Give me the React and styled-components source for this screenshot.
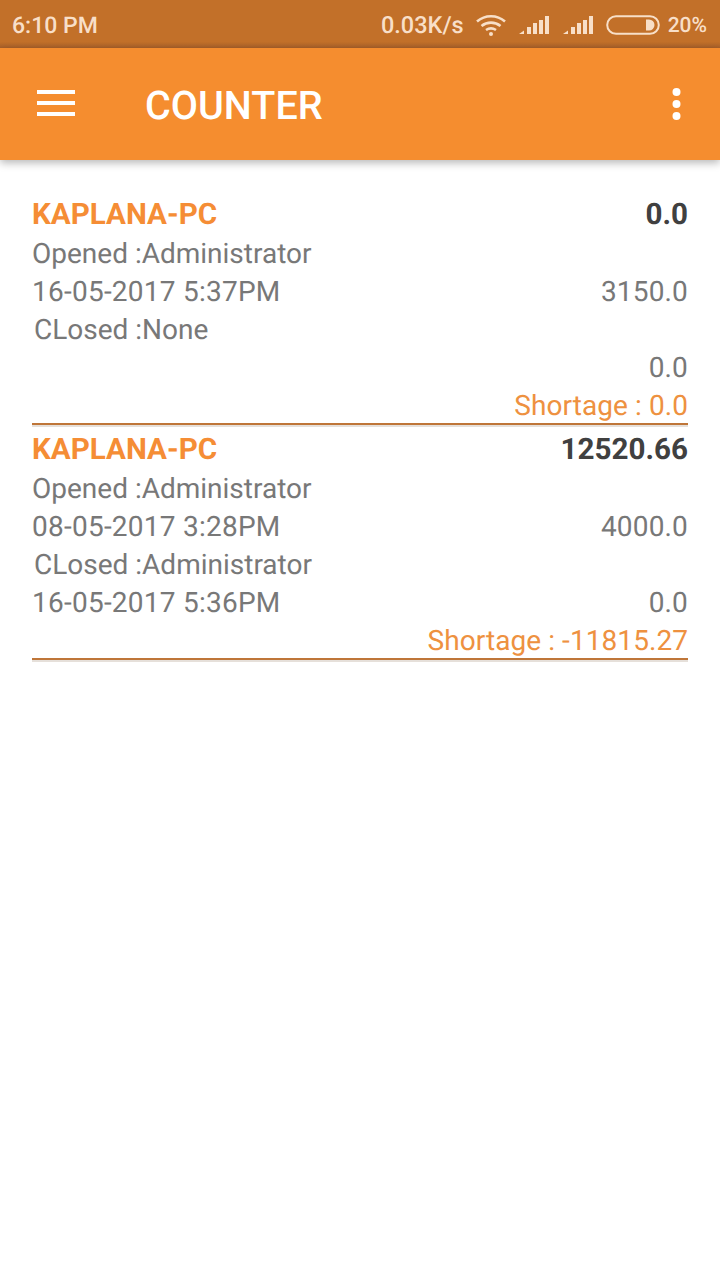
import React from 'react';
import styled, { createGlobalStyle } from 'styled-components';

const GlobalStyle = createGlobalStyle`
	html, body {
		margin: 0;
		padding: 0;
		background: #ffffff;
		font-family: Roboto, "Liberation Sans", sans-serif;
		text-rendering: geometricPrecision;
	}
`;

const Page = styled.div`
	width: 720px;
	height: 1280px;
	overflow: hidden;
	background: #ffffff;
`;

const StatusBar = styled.div`
	display: flex;
	align-items: center;
	justify-content: space-between;
	height: 48px;
	box-sizing: border-box;
	padding: 2px 13px 0 12px;
	background: linear-gradient(to bottom, #c27029 0, #c27029 42px, #a8602a 48px);
	color: #f8dfc8;
	font-size: 23px;
	font-weight: 500;
`;

const StatusRight = styled.div`
	display: flex;
	align-items: center;
`;

const Speed = styled.span`
	margin-right: 11px;
	font-size: 23.5px;
`;

const Percent = styled.span`
	margin-left: 8px;
	margin-top: 1px;
	font-size: 21px;
`;

const Glyph = styled.svg`
	display: block;
	margin-right: ${props => props.$gap || 0}px;
	margin-bottom: ${props => props.$lift || 0}px;
`;

const TopBar = styled.div`
	position: relative;
	display: flex;
	align-items: center;
	height: 112px;
	box-sizing: border-box;
	padding: 4px 39px 0 37px;
	background: #f58d2f;
	box-shadow: 0 3px 8px rgba(0, 0, 0, 0.28);
`;

const Title = styled.div`
	flex: 1;
	margin-left: 70px;
	color: #ffffff;
	font-size: 39.5px;
	font-weight: 500;
	line-height: 44px;
`;

const List = styled.div`
	padding: 35px 32px 0;
`;

const Entry = styled.div`
	margin-bottom: ${props => (props.$last ? 0 : 5)}px;
	border-bottom: 2px solid #bf7639;
	box-shadow: 0 2px 0 #e6e0da;
`;

const Row = styled.div`
	display: flex;
	justify-content: space-between;
	height: ${props => props.$height || 38}px;
	line-height: ${props => props.$line || 38}px;
	font-size: 28px;
	color: #787878;
	white-space: nowrap;
`;

const Name = styled.span`
	color: #f58d35;
	font-weight: 700;
	font-size: 29.6px;
`;

const Total = styled.span`
	color: #404040;
	font-weight: 700;
	font-size: 29.6px;
`;

const Stamp = styled.span`
	letter-spacing: 0.24px;
`;

const Amount = styled.span`
	letter-spacing: 0.16px;
`;

const ClosedLabel = styled.span`
	margin-left: 2px;
`;

const Shortage = styled.span`
	margin-left: auto;
	color: #ee9140;
	letter-spacing: 0.07px;
`;

const Signal = () => (
	<Glyph width="32" height="20" viewBox="0 0 32 20" $gap={12} fill="#f8dfc8">
		<path d="M1 19 L6 15.5 V19 Z" />
		<rect x="9" y="12" width="4" height="7" />
		<rect x="15" y="8" width="4" height="11" />
		<rect x="21" y="5" width="4" height="14" />
		<rect x="27" y="1" width="4" height="18" />
	</Glyph>
);

const entries = [
	{
		total: '0.0',
		opened: '16-05-2017 5:37PM',
		openAmount: '3150.0',
		closedBy: 'None',
		closedAt: '',
		closeAmount: '0.0',
		shortage: '0.0'
	},
	{
		total: '12520.66',
		opened: '08-05-2017 3:28PM',
		openAmount: '4000.0',
		closedBy: 'Administrator',
		closedAt: '16-05-2017 5:36PM',
		closeAmount: '0.0',
		shortage: '-11815.27'
	}
];

const openedBy = 'Administrator';

const App = () => (
	<Page>
		<GlobalStyle />
		<StatusBar>
			<span>6:10 PM</span>
			<StatusRight>
				<Speed>0.03K/s</Speed>
				<Glyph width="32" height="24" viewBox="0 0 32 24" $gap={11} fill="none" stroke="#f8dfc8" strokeWidth="2.6">
					<path d="M2 8.5 C10 1.5 22 1.5 30 8.5" />
					<path d="M6.5 13 C12 8.5 20 8.5 25.5 13" />
					<path d="M11 17 C14 15 18 15 21 17" />
					<circle cx="16" cy="21" r="2" fill="#f8dfc8" stroke="none" />
				</Glyph>
				<Signal />
				<Signal />
				<Glyph width="54" height="20" viewBox="0 0 54 20">
					<rect x="1.2" y="1.2" width="51.6" height="17.6" rx="8.8" fill="none" stroke="#f8dfc8" strokeWidth="2" />
					<path d="M40 4.5 H43 A5.5 5.5 0 0 1 43 15.5 H40 Z" fill="#f8dfc8" />
				</Glyph>
				<Percent>20%</Percent>
			</StatusRight>
		</StatusBar>
		<TopBar>
			<Glyph width="38" height="26" viewBox="0 0 38 26" $lift={6} fill="#ffffff">
				<rect x="0" y="0" width="38" height="4" />
				<rect x="0" y="11" width="38" height="4" />
				<rect x="0" y="22" width="38" height="4" />
			</Glyph>
			<Title>COUNTER</Title>
			<Glyph width="9" height="32" viewBox="0 0 9 32" $lift={4} fill="#ffffff">
				<circle cx="4.5" cy="4" r="4" />
				<circle cx="4.5" cy="16" r="4" />
				<circle cx="4.5" cy="28" r="4" />
			</Glyph>
		</TopBar>
		<List>
			{entries.map((entry, index) => (
				<Entry key={index} $last={index === entries.length - 1}>
					<Row $height={40} $line={40}>
						<Name>KAPLANA-PC</Name>
						<Total>{entry.total}</Total>
					</Row>
					<Row>
						<span>Opened :{openedBy}</span>
					</Row>
					<Row>
						<Stamp>{entry.opened}</Stamp>
						<Amount>{entry.openAmount}</Amount>
					</Row>
					<Row>
						<ClosedLabel>CLosed :{entry.closedBy}</ClosedLabel>
					</Row>
					<Row>
						<Stamp>{entry.closedAt}</Stamp>
						<Amount>{entry.closeAmount}</Amount>
					</Row>
					<Row $height={36}>
						<Shortage>Shortage : {entry.shortage}</Shortage>
					</Row>
				</Entry>
			))}
		</List>
	</Page>
);

export default App;
